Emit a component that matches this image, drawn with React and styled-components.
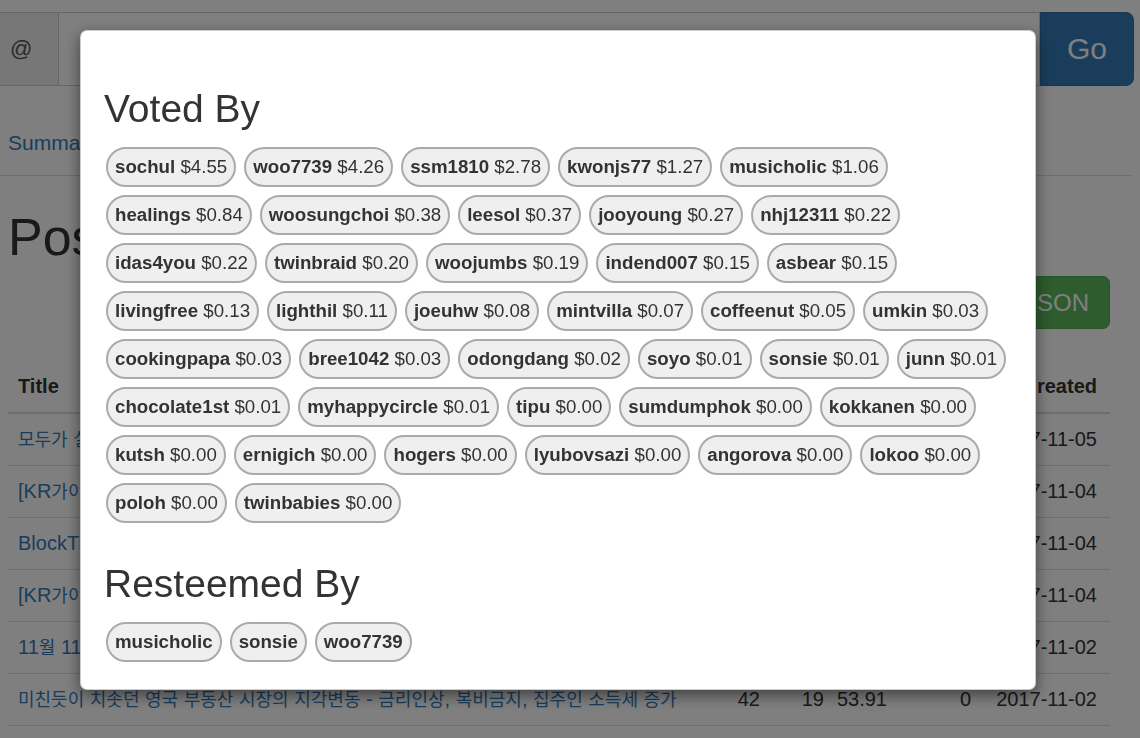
import React from "react";
import styled, { createGlobalStyle } from "styled-components";

const GlobalStyle = createGlobalStyle`
  html, body { margin: 0; padding: 0; background: #fff; }
  body {
    font-family: "Liberation Sans", "Noto Sans CJK KR", Arial, sans-serif;
    color: #333;
    overflow: hidden;
  }
  * { box-sizing: border-box; }
`;

const Page = styled.div`
  padding-top: 12px;
  width: 1140px;
`;

const InputGroup = styled.div`
  display: flex;
  height: 74px;
  margin-right: 6px;
`;

const Addon = styled.span`
  width: 58px;
  display: flex;
  align-items: center;
  padding-left: 10px;
  background: #eee;
  border: 1px solid #ccc;
  border-left: 0;
  border-right: 0;
  font-size: 22px;
  color: #555;
`;

const TextInput = styled.div`
  flex: 1;
  border: 1px solid #ccc;
  background: #fff;
`;

const GoButton = styled.button`
  width: 94px;
  border: 1px solid #2e6da4;
  background: #337ab7;
  color: #fff;
  font-family: inherit;
  font-size: 30px;
  border-radius: 0 8px 8px 0;
`;

const NavTabs = styled.ul`
  list-style: none;
  margin: 25px 8px 0 0;
  padding: 0;
  display: flex;
  border-bottom: 1px solid #ddd;
`;

const TabLink = styled.a`
  display: block;
  padding: 18px 8px;
  line-height: 28px;
  font-size: 21px;
  color: #337ab7;
  text-decoration: none;
  margin-right: 20px;
`;

const Content = styled.div`
  padding: 0 30px 0 8px;
`;

const Title = styled.h1`
  margin: 33px 0 0;
  font-size: 52px;
  line-height: 57px;
  font-weight: 500;
  color: #333;
`;

const ActionRow = styled.div`
  display: flex;
  justify-content: flex-end;
  margin-top: 10px;
`;

const SuccessButton = styled.button`
  font-family: inherit;
  font-size: 24px;
  line-height: 31px;
  padding: 10px 20px 10px 22px;
  background: #5cb85c;
  border: 1px solid #4cae4c;
  color: #fff;
  border-radius: 7px;
`;

const Table = styled.table`
  margin-top: 32px;
  width: 100%;
  border-collapse: collapse;
  table-layout: fixed;
  font-size: 20px;
`;

const cellPadding = (p) =>
  p.$num ? "12px 10px 12px 0" : p.$date ? "12px 13px 12px 0" : "12px 10px";

const Th = styled.th`
  text-align: ${(p) => (p.$num || p.$date ? "right" : "left")};
  font-weight: bold;
  line-height: 27px;
  padding: ${cellPadding};
  border-bottom: 2px solid #ddd;
  white-space: nowrap;
  overflow: hidden;
  color: #333;
`;

const Td = styled.td`
  text-align: ${(p) => (p.$num || p.$date ? "right" : "left")};
  line-height: 27px;
  height: 52px;
  padding: ${cellPadding};
  border-bottom: 1px solid #ddd;
  white-space: nowrap;
  overflow: hidden;
  color: #333;
`;

const PostLink = styled.a`
  color: #337ab7;
  text-decoration: none;
`;

const Hangul = styled.span`
  font-family: "Noto Sans CJK KR", sans-serif;
  font-size: 18px;
  line-height: 1;
`;

const Backdrop = styled.div`
  position: fixed;
  inset: 0;
  background: rgba(0, 0, 0, 0.5);
  z-index: 1040;
`;

const Modal = styled.div`
  position: fixed;
  left: 80px;
  top: 30px;
  width: 956px;
  background: #fff;
  border: 1px solid rgba(0, 0, 0, 0.2);
  border-radius: 7px;
  box-shadow: 0 5px 15px rgba(0, 0, 0, 0.5);
  padding: 0 16px 27px 23px;
  z-index: 1050;
`;

const SectionTitle = styled.h2`
  margin: ${(p) => (p.$first ? "56px" : "39px")} 0 0;
  font-size: 39px;
  line-height: 43px;
  font-weight: 500;
  color: #333;
`;

const PillList = styled.div`
  display: flex;
  flex-wrap: wrap;
  gap: 8px 8px;
  margin: 17px 0 0 2px;
`;

const Pill = styled.span`
  display: inline-block;
  height: 40px;
  line-height: 36px;
  padding: 0 7px;
  border: 2px solid #aaa;
  border-radius: 20px;
  background: #efefef;
  font-size: 18.7px;
  color: #333;
  white-space: nowrap;
`;

const Name = styled.b`
  font-weight: bold;
`;

const voters = [
  ["sochul", "$4.55"], ["woo7739", "$4.26"], ["ssm1810", "$2.78"], ["kwonjs77", "$1.27"], ["musicholic", "$1.06"],
  ["healings", "$0.84"], ["woosungchoi", "$0.38"], ["leesol", "$0.37"], ["jooyoung", "$0.27"], ["nhj12311", "$0.22"],
  ["idas4you", "$0.22"], ["twinbraid", "$0.20"], ["woojumbs", "$0.19"], ["indend007", "$0.15"], ["asbear", "$0.15"],
  ["livingfree", "$0.13"], ["lighthil", "$0.11"], ["joeuhw", "$0.08"], ["mintvilla", "$0.07"], ["coffeenut", "$0.05"], ["umkin", "$0.03"],
  ["cookingpapa", "$0.03"], ["bree1042", "$0.03"], ["odongdang", "$0.02"], ["soyo", "$0.01"], ["sonsie", "$0.01"], ["junn", "$0.01"],
  ["chocolate1st", "$0.01"], ["myhappycircle", "$0.01"], ["tipu", "$0.00"], ["sumdumphok", "$0.00"], ["kokkanen", "$0.00"],
  ["kutsh", "$0.00"], ["ernigich", "$0.00"], ["hogers", "$0.00"], ["lyubovsazi", "$0.00"], ["angorova", "$0.00"], ["lokoo", "$0.00"],
  ["poloh", "$0.00"], ["twinbabies", "$0.00"],
];

const resteemers = ["musicholic", "sonsie", "woo7739"];

const posts = [
  { title: "모두가 실패할 때 기회를 잡는 사람들", votes: 51, comments: 23, payout: "61.20", resteems: 2, created: "2017-11-05" },
  { title: "[KR가이드] 스팀잇 초보자를 위한 글쓰기 안내", votes: 48, comments: 17, payout: "44.07", resteems: 1, created: "2017-11-04" },
  { title: "BlockTrades 를 이용한 스팀 입출금 방법", votes: 39, comments: 12, payout: "32.15", resteems: 0, created: "2017-11-04" },
  { title: "[KR가이드] 스팀달러와 스팀파워의 차이", votes: 45, comments: 20, payout: "47.82", resteems: 3, created: "2017-11-04" },
  { title: "11월 11일 빼빼로데이의 유래", votes: 40, comments: 15, payout: "38.64", resteems: 0, created: "2017-11-02" },
  { title: "미친듯이 치솟던 영국 부동산 시장의 지각변동 - 금리인상, 복비금지, 집주인 소득세 증가", votes: 42, comments: 19, payout: "53.91", resteems: 0, created: "2017-11-02" },
];

function splitHangul(text) {
  return text.split(/([\uAC00-\uD7A3]+)/).map((part, i) =>
    /[\uAC00-\uD7A3]/.test(part) ? <Hangul key={i}>{part}</Hangul> : part
  );
}

export default function App() {
  return (
    <>
      <GlobalStyle />
      <Page>
        <InputGroup>
          <Addon>@</Addon>
          <TextInput />
          <GoButton>Go</GoButton>
        </InputGroup>
        <NavTabs>
          <li><TabLink href="#">Summary</TabLink></li>
          <li><TabLink href="#">Posts</TabLink></li>
          <li><TabLink href="#">Comments</TabLink></li>
        </NavTabs>
        <Content>
          <Title>Posts</Title>
          <ActionRow>
            <SuccessButton>Download JSON</SuccessButton>
          </ActionRow>
          <Table>
            <colgroup>
              <col style={{ width: 722 }} />
              <col style={{ width: 40 }} />
              <col style={{ width: 64 }} />
              <col style={{ width: 63 }} />
              <col style={{ width: 84 }} />
              <col style={{ width: 129 }} />
            </colgroup>
            <thead>
              <tr>
                <Th>Title</Th>
                <Th $num>V</Th>
                <Th $num>C</Th>
                <Th $num>$</Th>
                <Th $num>R</Th>
                <Th $date>Created</Th>
              </tr>
            </thead>
            <tbody>
              {posts.map((p) => (
                <tr key={p.title}>
                  <Td><PostLink href="#">{splitHangul(p.title)}</PostLink></Td>
                  <Td $num>{p.votes}</Td>
                  <Td $num>{p.comments}</Td>
                  <Td $num>{p.payout}</Td>
                  <Td $num>{p.resteems}</Td>
                  <Td $date>{p.created}</Td>
                </tr>
              ))}
            </tbody>
          </Table>
        </Content>
      </Page>
      <Backdrop />
      <Modal>
        <SectionTitle $first>Voted By</SectionTitle>
        <PillList>
          {voters.map(([name, amount]) => (
            <Pill key={name}>
              <Name>{name}</Name> {amount}
            </Pill>
          ))}
        </PillList>
        <SectionTitle>Resteemed By</SectionTitle>
        <PillList>
          {resteemers.map((name) => (
            <Pill key={name}>
              <Name>{name}</Name>
            </Pill>
          ))}
        </PillList>
      </Modal>
    </>
  );
}
